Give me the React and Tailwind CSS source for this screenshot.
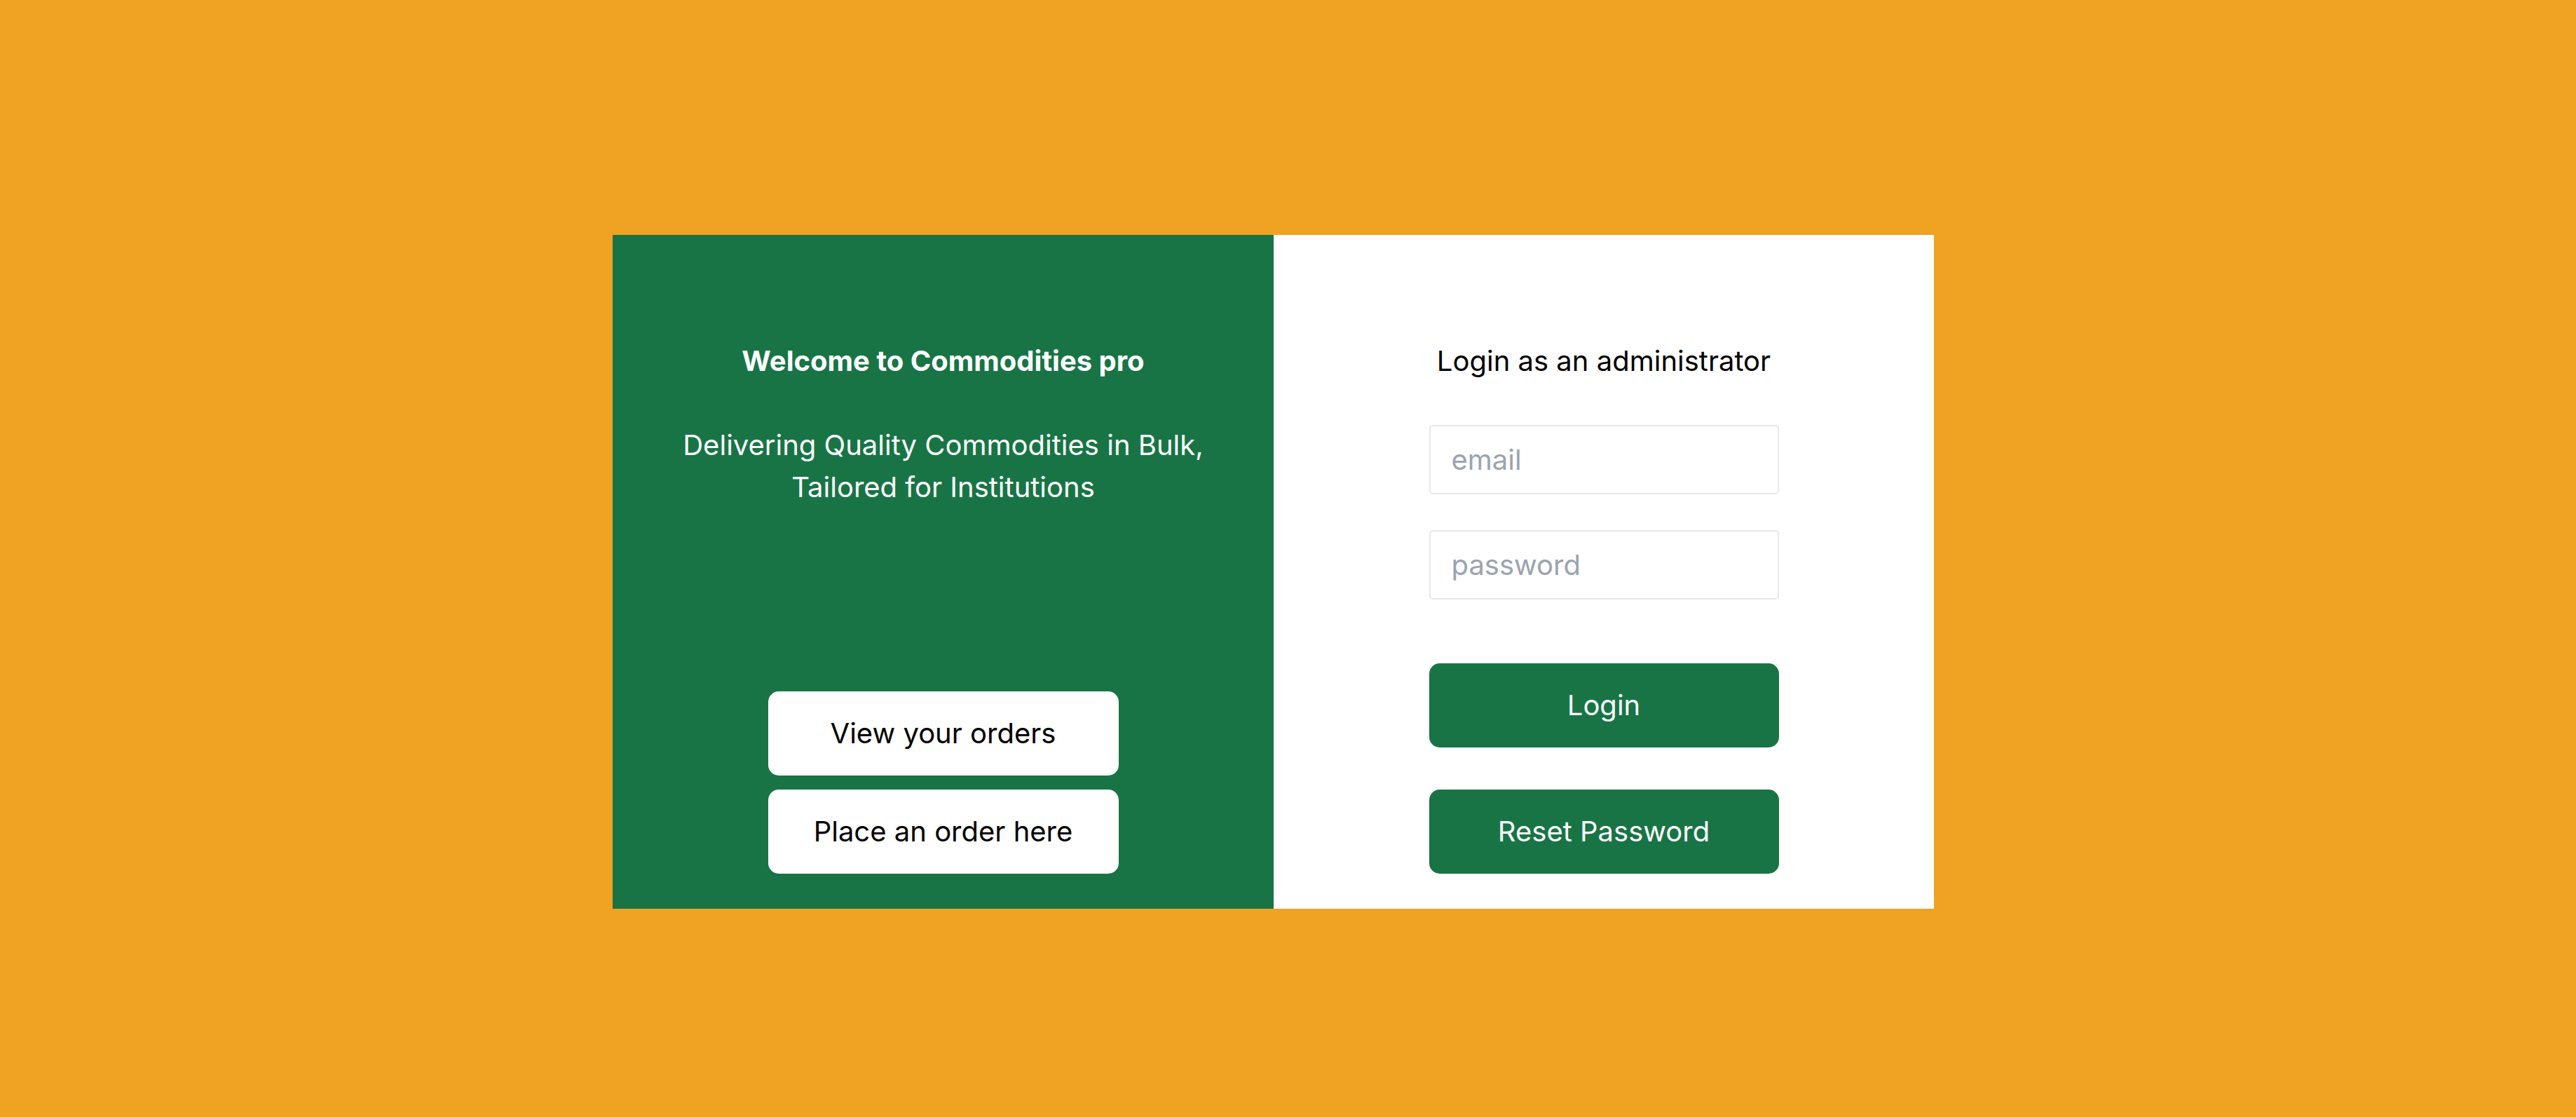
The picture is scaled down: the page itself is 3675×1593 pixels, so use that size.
import React from 'react';

const App = () => {
  return (
    <div
      className="w-full h-[1593px] bg-[#f0a222] pt-[335px] pl-[874px]"
      style={{ fontFamily: 'Inter, "Noto Sans", sans-serif' }}
    >
      <div className="flex h-[961px] w-[1885px]">
        {/* Welcome panel */}
        <div className="w-[943px] bg-[#187445] flex flex-col items-center justify-between pt-[150px] pb-[50px] text-white text-center">
          <div className="flex flex-col items-center">
            <h1 className="text-[40px] leading-[60px] font-bold">Welcome to Commodities pro</h1>
            <p className="mt-[60px] text-[40px] leading-[60px]">
              Delivering Quality Commodities in Bulk,
              <br />
              Tailored for Institutions
            </p>
          </div>
          <div className="flex flex-col gap-[20px]">
            <button className="w-[500px] h-[120px] rounded-[15px] bg-white text-black text-[40px] leading-[60px]">
              View your orders
            </button>
            <button className="w-[500px] h-[120px] rounded-[15px] bg-white text-black text-[40px] leading-[60px]">
              Place an order here
            </button>
          </div>
        </div>

        {/* Login panel */}
        <div className="w-[942px] bg-white flex flex-col items-center pt-[150px] pb-[50px]">
          <h2 className="text-[40px] leading-[60px] text-black">Login as an administrator</h2>
          <input
            type="email"
            placeholder="email"
            className="mt-[61px] w-[499px] h-[99px] rounded-[5px] border-[2.5px] border-[#e5e7eb] px-[30px] text-[40px] placeholder:text-[#9ca3af] outline-none"
          />
          <input
            type="password"
            placeholder="password"
            className="mt-[51px] w-[499px] h-[99px] rounded-[5px] border-[2.5px] border-[#e5e7eb] px-[30px] text-[40px] placeholder:text-[#9ca3af] outline-none"
          />
          <button className="mt-[91px] w-[499px] h-[120px] rounded-[15px] bg-[#187445] text-white text-[40px] leading-[60px]">
            Login
          </button>
          <button className="mt-[60px] w-[499px] h-[120px] rounded-[15px] bg-[#187445] text-white text-[40px] leading-[60px]">
            Reset Password
          </button>
        </div>
      </div>
    </div>
  );
};

export default App;
